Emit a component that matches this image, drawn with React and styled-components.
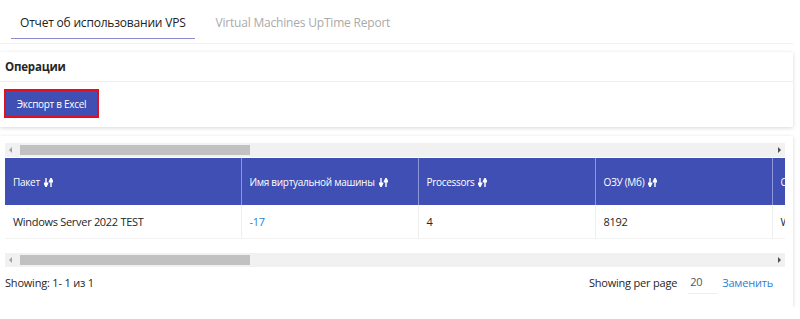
import React from 'react';
import styled, { createGlobalStyle } from 'styled-components';

const Global = createGlobalStyle`
  html, body { margin: 0; padding: 0; background: #fff; }
  body { font-family: "Open Sans", "Noto Sans", sans-serif; color: #262626; }
`;

const Page = styled.div`
  width: 793px;
  padding-top: 11px;
`;

const Tabs = styled.div`
  display: flex;
  border-bottom: 1px solid #f0f0f0;
  padding-left: 11px;
  height: 32px;
`;

const Tab = styled.div`
  padding: 0 9px;
  font-size: 12px;
  letter-spacing: -0.2px;
  line-height: 24px;
  height: 27px;
  margin-right: 12px;
  color: ${p => (p.active ? '#222' : '#aaa')};
  border-bottom: ${p => (p.active ? '1px solid #8a8ad0' : '1px solid transparent')};
`;

const Card = styled.div`
  background: #fff;
  box-shadow: 0 1px 4px rgba(0, 0, 0, 0.16);
  margin-top: ${p => p.mt || 0}px;
`;

const CardHead = styled.div`
  height: 29px;
  display: flex;
  align-items: center;
  padding-left: 5px;
  font-size: 11.5px;
  font-weight: 700;
  letter-spacing: -0.2px;
  border-bottom: 1px solid #eee;
`;

const CardBody = styled.div`
  padding: 7px 4px 9px;
`;

const ExportButton = styled.button`
  width: 95px;
  height: 29px;
  border: 2px solid #e0101e;
  background: #3f4fb4;
  color: #fff;
  font-family: inherit;
  font-size: 10px;
  letter-spacing: -0.3px;
  padding: 0;
`;

const TableCard = styled(Card)`
  padding: 7px 8px 10px 5px;
`;

const Bar = styled.div`
  height: 14px;
  background: #f1f1f1;
  display: flex;
  align-items: center;
  position: relative;
`;

const Thumb = styled.div`
  position: absolute;
  left: 15px;
  top: 2px;
  height: 10px;
  background: #c1c1c1;
`;

const Arrow = styled.div`
  width: 0;
  height: 0;
  border-top: 3px solid transparent;
  border-bottom: 3px solid transparent;
  ${p => (p.dir === 'left'
    ? 'border-right: 3px solid #a3a3a3; margin-left: 4px;'
    : 'border-left: 3px solid #505050; margin-left: auto; margin-right: 4px;')}
`;

const ScrollBar = ({ thumb }) => (
  <Bar>
    <Arrow dir="left" />
    <Thumb style={{ width: thumb }} />
    <Arrow dir="right" />
  </Bar>
);

const TableWrap = styled.div`
  overflow: hidden;
  margin: 1px 0 14px;
`;

const Table = styled.table`
  border-collapse: collapse;
  table-layout: fixed;
  width: 1100px;
`;

const Th = styled.th`
  background: #3f4fb4;
  color: #fff;
  font-weight: 400;
  font-size: 10px;
  letter-spacing: -0.3px;
  text-align: left;
  height: 47px;
  padding: 0 8px;
  border-right: 1px solid #8d96d8;
  white-space: nowrap;
  overflow: hidden;
`;

const Td = styled.td`
  height: 33px;
  padding: 0 8px;
  font-size: 11px;
  letter-spacing: -0.3px;
  border-right: 1px solid #eee;
  border-bottom: 1px solid #f2f2f2;
  color: ${p => (p.link ? '#2d7fd1' : '#262626')};
  white-space: nowrap;
  overflow: hidden;
`;

const SortIcon = styled.svg`
  width: 9px;
  height: 9px;
  margin-left: 4px;
  vertical-align: -1px;
`;

const Sort = () => (
  <SortIcon viewBox="0 0 9 9">
    <path d="M2 0v6M0.3 5.2L2 8.8 3.7 5.2z" stroke="#fff" strokeWidth="1.4" fill="#fff" strokeLinejoin="round" />
    <path d="M7 9V3M5.3 3.8L7 0.2 8.7 3.8z" stroke="#fff" strokeWidth="1.4" fill="#fff" strokeLinejoin="round" />
  </SortIcon>
);

const Footer = styled.div`
  display: flex;
  align-items: center;
  font-size: 11px;
  letter-spacing: -0.2px;
  height: 30px;
`;

const PerPage = styled.div`
  margin-left: auto;
  margin-right: 12px;
  display: flex;
  align-items: center;
`;

const PageInput = styled.div`
  width: 27px;
  margin-left: 11px;
  padding-left: 2px;
  color: #555;
  border-bottom: 1px solid #eee;
  line-height: 22px;
`;

const LinkText = styled.span`
  color: #2d7fd1;
  margin-left: 5px;
`;

const columns = [
  { title: 'Пакет', width: 236 },
  { title: 'Имя виртуальной машины', width: 177 },
  { title: 'Processors', width: 177 },
  { title: 'ОЗУ (Мб)', width: 177 },
  { title: 'ОС', width: 333 },
];

const row = ['Windows Server 2022 TEST', '-17', '4', '8192', 'Windows'];

export default function App() {
  return (
    <Page>
      <Global />
      <Tabs>
        <Tab active>Отчет об использовании VPS</Tab>
        <Tab>Virtual Machines UpTime Report</Tab>
      </Tabs>
      <Card mt={8}>
        <CardHead>Операции</CardHead>
        <CardBody>
          <ExportButton>Экспорт в Excel</ExportButton>
        </CardBody>
      </Card>
      <TableCard mt={9}>
        <ScrollBar thumb={230} />
        <TableWrap>
          <Table>
            <colgroup>
              {columns.map(c => <col key={c.title} style={{ width: c.width }} />)}
            </colgroup>
            <thead>
              <tr>
                {columns.map(c => (
                  <Th key={c.title}>{c.title}<Sort /></Th>
                ))}
              </tr>
            </thead>
            <tbody>
              <tr>
                {row.map((v, i) => <Td key={i} link={i === 1}>{v}</Td>)}
              </tr>
            </tbody>
          </Table>
        </TableWrap>
        <ScrollBar thumb={230} />
        <Footer>
          <span>Showing: 1- 1 из 1</span>
          <PerPage>
            <span>Showing per page</span>
            <PageInput>20</PageInput>
            <LinkText>Заменить</LinkText>
          </PerPage>
        </Footer>
      </TableCard>
    </Page>
  );
}
